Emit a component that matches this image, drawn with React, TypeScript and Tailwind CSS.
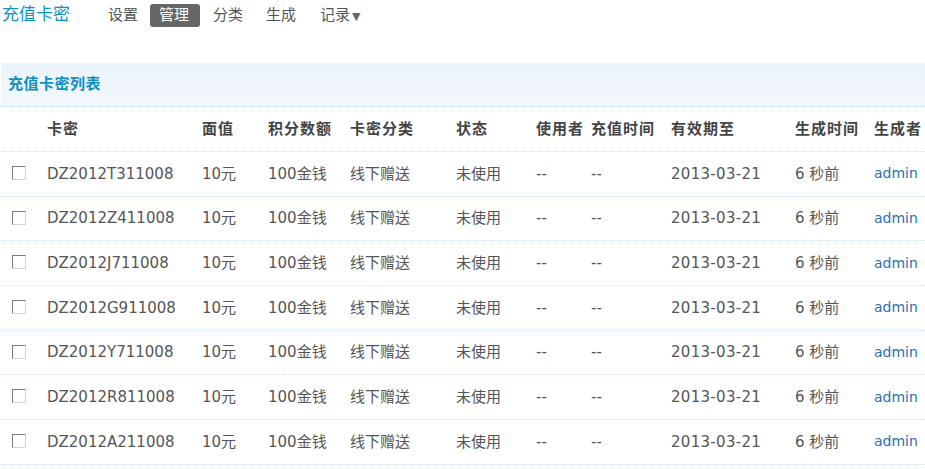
import React from 'react';

const rows = [
  'DZ2012T311008',
  'DZ2012Z411008',
  'DZ2012J711008',
  'DZ2012G911008',
  'DZ2012Y711008',
  'DZ2012R811008',
  'DZ2012A211008',
];

const cols = 'grid grid-cols-[47px_155px_66px_82px_106px_80px_55px_80px_124px_79px_1fr] items-center';
const font = { fontFamily: '"DejaVu Sans", Verdana, "Noto Sans CJK SC", sans-serif' };

export default function App() {
  return (
    <div className="w-[925px] h-[469px] overflow-hidden bg-white text-[15px] text-[#555]" style={font}>
      {/* 顶部导航 */}
      <div className="flex items-center h-[31px]">
        <div className="pl-[2px] text-[17px] text-[#0e93c6] w-[108px] -mt-[1px]">充值卡密</div>
        <div className="flex items-center text-[15px]">
          <span className="h-[23px] leading-[23px]">设置</span>
          <span className="ml-[12px] px-[9px] w-[50px] h-[23px] leading-[23px] rounded-[3px] bg-[#666] text-white">管理</span>
          <span className="ml-[13px] h-[23px] leading-[23px]">分类</span>
          <span className="ml-[23px] h-[23px] leading-[23px]">生成</span>
          <span className="ml-[24px] h-[23px] leading-[23px]">
            记录<span className="text-[11px] text-[#666] ml-[2px]">▼</span>
          </span>
        </div>
      </div>

      {/* 列表标题 */}
      <div className="mt-[32px] ml-[1px] h-[44px] flex items-center pl-[7px] bg-gradient-to-b from-[#ebf3fb] to-[#f3f8fd] border-b border-dotted border-[#c9dcef]">
        <span className="font-bold text-[15px] tracking-[0.5px] text-[#0e8ec2]">充值卡密列表</span>
      </div>

      {/* 表头 */}
      <div className={`${cols} h-[45px] border-b border-dotted border-[#d3e3f2] font-bold text-[#444] tracking-[1px]`}>
        <span />
        <span>卡密</span>
        <span>面值</span>
        <span>积分数额</span>
        <span>卡密分类</span>
        <span>状态</span>
        <span>使用者</span>
        <span>充值时间</span>
        <span>有效期至</span>
        <span>生成时间</span>
        <span className="whitespace-nowrap">生成者</span>
      </div>

      {/* 数据行 */}
      {rows.map((code) => (
        <div key={code} className={`${cols} h-[44.7px] border-b border-dotted border-[#d3e3f2]`}>
          <span className="pl-[12px] flex items-center -mt-[2px]">
            <span className="block w-[14px] h-[14px] bg-white border border-t-[#7a7a7a] border-l-[#7a7a7a] border-r-[#d4d4d4] border-b-[#d4d4d4]" />
          </span>
          <span>{code}</span>
          <span>10元</span>
          <span>100金钱</span>
          <span>线下赠送</span>
          <span>未使用</span>
          <span>--</span>
          <span>--</span>
          <span className="tracking-[0.3px]">2013-03-21</span>
          <span>6 秒前</span>
          <span className="text-[14px] text-[#2a6fb8]">admin</span>
        </div>
      ))}
    </div>
  );
}
